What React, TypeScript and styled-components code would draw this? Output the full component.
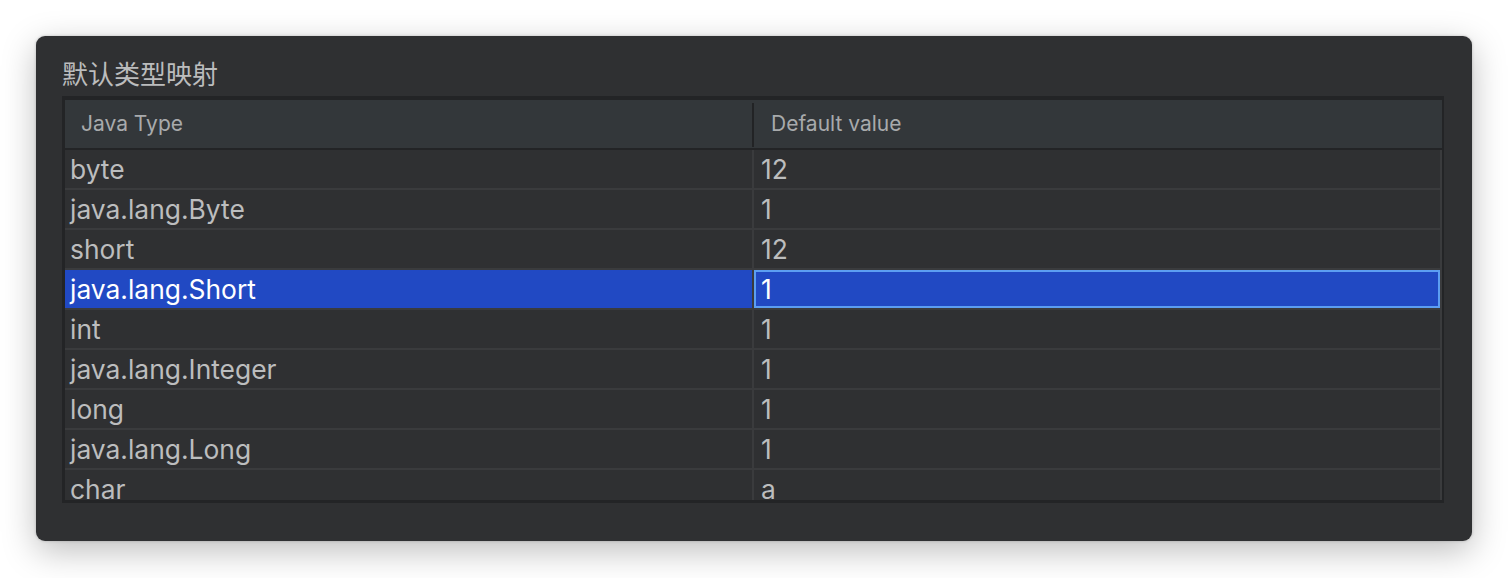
import React from "react";
import styled, { createGlobalStyle } from "styled-components";

const GlobalStyle = createGlobalStyle`
  html, body { margin: 0; padding: 0; background: #ffffff; }
  body { font-family: Inter, "Liberation Sans", "Noto Sans CJK SC", sans-serif; }
`;

const Page = styled.div`
  width: 1508px;
  height: 578px;
  box-sizing: border-box;
  padding: 36px 36px;
  background: #ffffff;
`;

const Panel = styled.div`
  width: 1436px;
  height: 505px;
  box-sizing: border-box;
  background: #2f3032;
  border-radius: 9px;
  box-shadow: 0 10px 34px rgba(0, 0, 0, 0.26), 0 0 3px rgba(0, 0, 0, 0.22);
  padding: 0 28px 0 26px;
  display: flex;
  flex-direction: column;
`;

const Title = styled.div`
  margin: 22px 0 8px;
  line-height: 30px;
  font-size: 26px;
  color: #bbbcbd;
  font-family: "Noto Sans CJK SC", sans-serif;
`;

const Table = styled.div`
  width: 1382px;
  height: 407px;
  box-sizing: border-box;
  border-style: solid;
  border-color: #232426;
  border-width: 4px 2px 3px 3px;
  display: flex;
  flex-direction: column;
`;

const Header = styled.div`
  height: 48px;
  flex: none;
  background: #33373a;
  border-bottom: 2px solid #232426;
  display: flex;
  align-items: center;
`;

const HeaderCell = styled.div<{ $width?: number; $pad: number }>`
  ${(p) => (p.$width ? `width: ${p.$width}px; flex: none;` : "flex: 1;")}
  box-sizing: border-box;
  padding-left: ${(p) => p.$pad}px;
  font-size: 21px;
  color: #a8aaac;
  line-height: 48px;
`;

const HeaderDivider = styled.div`
  width: 2px;
  height: 44px;
  flex: none;
  background: #222325;
  align-self: center;
  margin-top: 1px;
`;

const Body = styled.div`
  height: 350px;
  flex: none;
  overflow: hidden;
`;

const Row = styled.div`
  height: 40px;
  box-sizing: border-box;
  border-bottom: 2px solid #3a3b3d;
  display: flex;
`;

const Cell = styled.div<{ $width?: number; $pad: number; $selected?: boolean; $focused?: boolean }>`
  ${(p) => (p.$width ? `width: ${p.$width}px; flex: none;` : "flex: 1;")}
  box-sizing: border-box;
  height: 38px;
  border-right: 2px solid #3a3b3d;
  padding-left: ${(p) => p.$pad}px;
  display: flex;
  align-items: center;
  font-size: 26.4px;
  color: ${(p) => (p.$selected ? "#ffffff" : "#bcbdbe")};
  background: ${(p) => (p.$selected ? "#2149c3" : "transparent")};
  box-shadow: ${(p) => (p.$focused ? "inset 0 0 0 2px #5c9ef2" : "none")};
  white-space: nowrap;
`;

const rows: [string, string][] = [
  ["byte", "12"],
  ["java.lang.Byte", "1"],
  ["short", "12"],
  ["java.lang.Short", "1"],
  ["int", "1"],
  ["java.lang.Integer", "1"],
  ["long", "1"],
  ["java.lang.Long", "1"],
  ["char", "a"],
];

const SELECTED = 3;

export default function App() {
  return (
    <>
      <GlobalStyle />
      <Page>
        <Panel>
          <Title>默认类型映射</Title>
          <Table>
            <Header>
              <HeaderCell $width={687} $pad={16}>Java Type</HeaderCell>
              <HeaderDivider />
              <HeaderCell $pad={17}>Default value</HeaderCell>
            </Header>
            <Body>
              {rows.map(([type, value], i) => (
                <Row key={type}>
                  <Cell $width={689} $pad={5} $selected={i === SELECTED}>
                    {type}
                  </Cell>
                  <Cell $pad={7} $selected={i === SELECTED} $focused={i === SELECTED}>
                    {value}
                  </Cell>
                </Row>
              ))}
            </Body>
          </Table>
        </Panel>
      </Page>
    </>
  );
}
